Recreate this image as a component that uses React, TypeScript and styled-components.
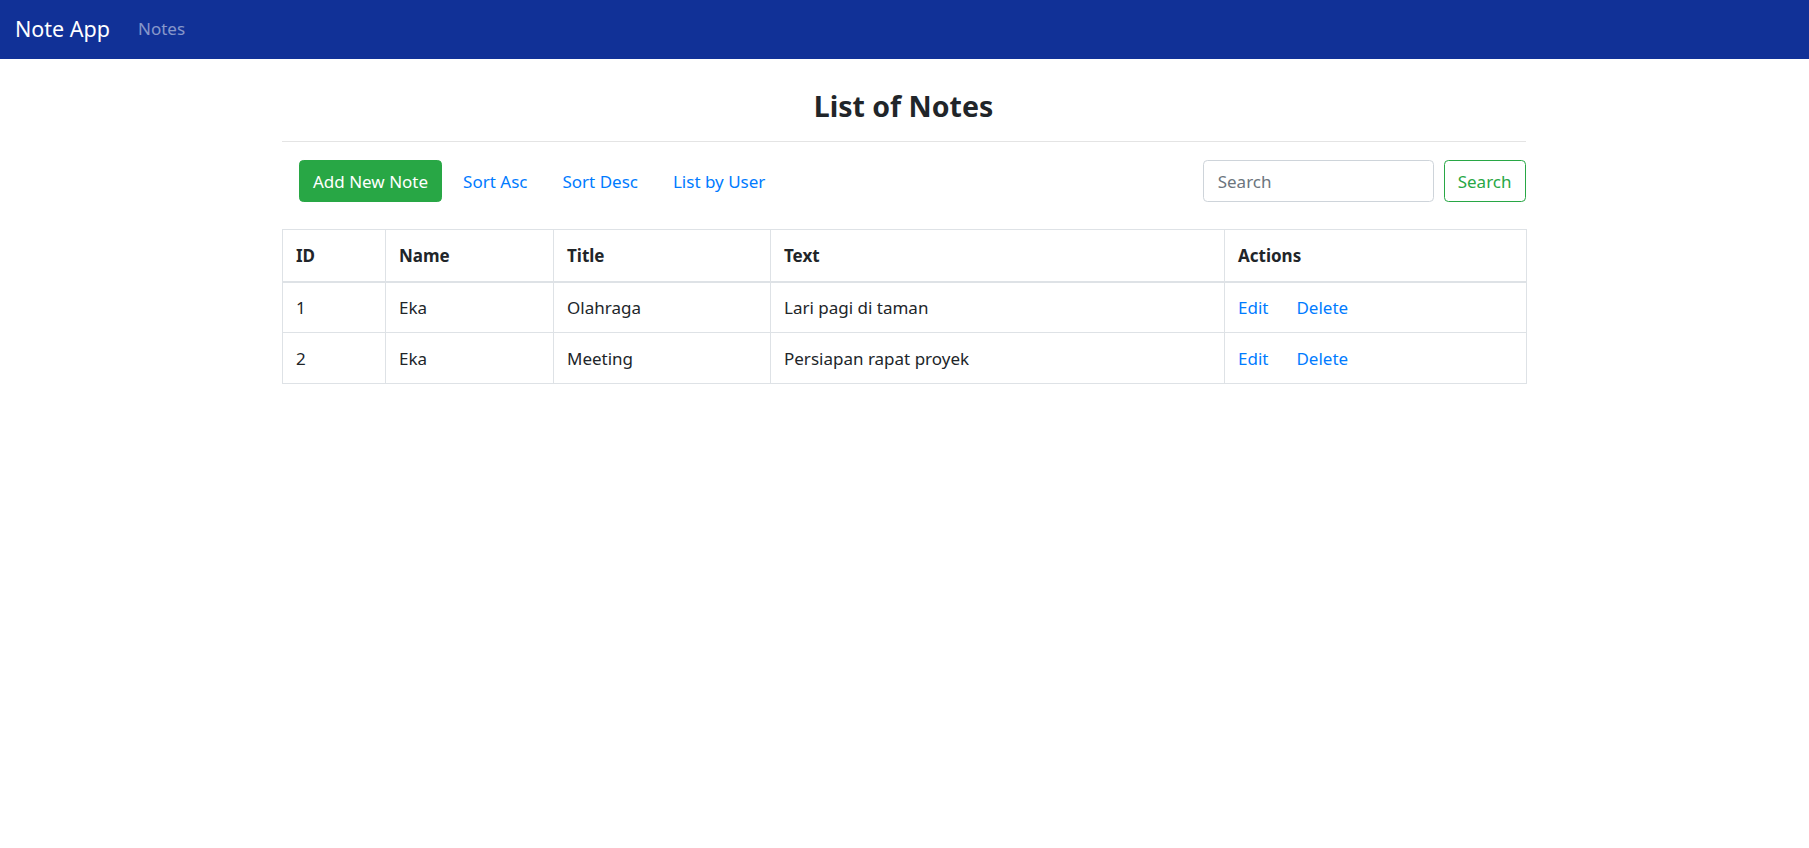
import React from "react";
import styled, { createGlobalStyle } from "styled-components";

const GlobalStyle = createGlobalStyle`
  html, body { margin: 0; padding: 0; background: #fff; }
  body {
    font-family: "Noto Sans", "Open Sans", Arial, sans-serif;
    color: #212529;
    font-size: 17px;
  }
  * { box-sizing: border-box; }
`;

const NavBar = styled.nav`
  height: 59px;
  background: #113197;
  display: flex;
  align-items: center;
  padding: 0 15px;
  gap: 28px;
`;

const Brand = styled.a`
  color: #fff;
  font-size: 21.5px;
  text-decoration: none;
  line-height: 1;
  margin-top: -2px;
`;

const NavLink = styled.a`
  color: rgba(255, 255, 255, 0.5);
  font-size: 17px;
  text-decoration: none;
  line-height: 1;
  margin-top: -2px;
`;

const Container = styled.main`
  width: 1246px;
  padding-right: 2px;
  margin: 0 auto;
`;

const Title = styled.h3`
  margin: 0;
  height: 83px;
  padding-top: 33px;
  text-align: center;
  font-size: 28.5px;
  font-weight: 700;
  line-height: 1;
  border-bottom: 1px solid #e4e4e4;
`;

const Toolbar = styled.div`
  display: flex;
  align-items: center;
  justify-content: space-between;
  margin-top: 18px;
  padding-left: 17.5px;
  height: 42px;
`;

const ButtonGroup = styled.div`
  display: flex;
  align-items: center;
  gap: 7px;
`;

const Button = styled.button<{ $variant: "success" | "link" | "outline" }>`
  font-family: inherit;
  font-size: 17px;
  height: 42px;
  padding: 0 13px;
  border-radius: 4.4px;
  cursor: pointer;
  line-height: 1;
  border: 1px solid
    ${(p) => (p.$variant === "link" ? "transparent" : "#28a745")};
  background: ${(p) => (p.$variant === "success" ? "#28a745" : "transparent")};
  color: ${(p) =>
    p.$variant === "success" ? "#fff" : p.$variant === "outline" ? "#28a745" : "#007bff"};
`;

const SearchForm = styled.form`
  display: flex;
  align-items: center;
  gap: 10px;
`;

const SearchInput = styled.input`
  width: 231px;
  height: 42px;
  font-family: inherit;
  font-size: 17px;
  padding: 0 14px;
  border: 1px solid #ced4da;
  border-radius: 4.4px;
  color: #495057;
  &::placeholder { color: #6c757d; }
`;

const Table = styled.table`
  margin-top: 27px;
  width: 100%;
  table-layout: fixed;
  border-collapse: collapse;
  font-size: 17px;
`;

const HeadCell = styled.th`
  text-align: left;
  font-weight: 700;
  height: 52px;
  padding: 0 13.5px;
  border: 1px solid #dee2e6;
  border-bottom: 2px solid #dee2e6;
  vertical-align: middle;
`;

const Cell = styled.td`
  height: 51px;
  padding: 0 13.5px;
  border: 1px solid #dee2e6;
  vertical-align: middle;
`;

const Actions = styled.div`
  display: flex;
  gap: 28px;
`;

const ActionLink = styled.a`
  color: #007bff;
  text-decoration: none;
  cursor: pointer;
`;

const notes = [
  { id: 1, name: "Eka", title: "Olahraga", text: "Lari pagi di taman" },
  { id: 2, name: "Eka", title: "Meeting", text: "Persiapan rapat proyek" },
];

export default function App() {
  return (
    <>
      <GlobalStyle />
      <NavBar>
        <Brand href="#">Note App</Brand>
        <NavLink href="#">Notes</NavLink>
      </NavBar>
      <Container>
        <Title>List of Notes</Title>
        <Toolbar>
          <ButtonGroup>
            <Button $variant="success">Add New Note</Button>
            <Button $variant="link">Sort Asc</Button>
            <Button $variant="link">Sort Desc</Button>
            <Button $variant="link">List by User</Button>
          </ButtonGroup>
          <SearchForm onSubmit={(e) => e.preventDefault()}>
            <SearchInput placeholder="Search" />
            <Button $variant="outline" type="submit">Search</Button>
          </SearchForm>
        </Toolbar>
        <Table>
          <colgroup>
            <col style={{ width: 103 }} />
            <col style={{ width: 168 }} />
            <col style={{ width: 217 }} />
            <col style={{ width: 454 }} />
            <col style={{ width: 302 }} />
          </colgroup>
          <thead>
            <tr>
              <HeadCell>ID</HeadCell>
              <HeadCell>Name</HeadCell>
              <HeadCell>Title</HeadCell>
              <HeadCell>Text</HeadCell>
              <HeadCell>Actions</HeadCell>
            </tr>
          </thead>
          <tbody>
            {notes.map((n) => (
              <tr key={n.id}>
                <Cell>{n.id}</Cell>
                <Cell>{n.name}</Cell>
                <Cell>{n.title}</Cell>
                <Cell>{n.text}</Cell>
                <Cell>
                  <Actions>
                    <ActionLink>Edit</ActionLink>
                    <ActionLink>Delete</ActionLink>
                  </Actions>
                </Cell>
              </tr>
            ))}
          </tbody>
        </Table>
      </Container>
    </>
  );
}
